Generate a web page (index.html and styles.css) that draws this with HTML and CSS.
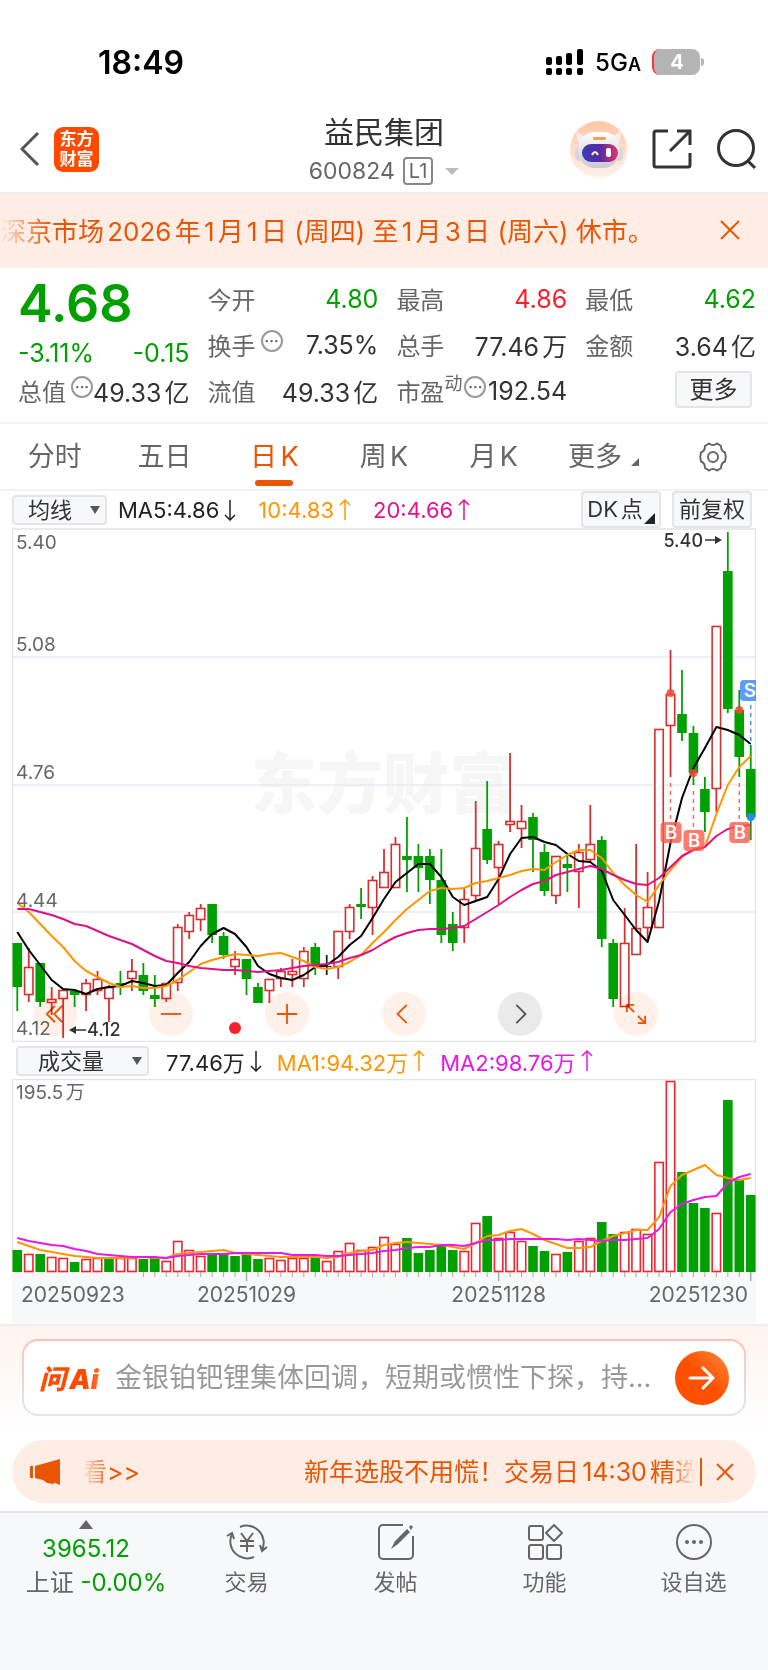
FILE: index.html
```
<!DOCTYPE html>
<html lang="zh-CN">
<head>
    <meta charset="UTF-8">
    <meta name="viewport" content="width=device-width, initial-scale=1.0">
    <title>益民集团 600824</title>
    <link rel="stylesheet" href="styles.css">
</head>
<body>
    <div class="status-bar">
        <span class="clock">18:49</span>
        <div class="status-right">
            <svg class="signal" viewBox="0 0 38 26">
                <g fill="#000">
                    <rect x="0" y="8" width="6" height="8" rx="2"/><rect x="10" y="7" width="6" height="9" rx="2"/>
                    <rect x="20" y="4" width="6" height="12" rx="2"/><rect x="31" y="0" width="6" height="16" rx="2"/>
                    <rect x="0" y="19" width="6" height="7" rx="2"/><rect x="10" y="19" width="6" height="7" rx="2"/>
                    <rect x="20" y="19" width="6" height="7" rx="2"/><rect x="31" y="19" width="6" height="7" rx="2"/>
                </g>
            </svg>
            <span class="network">5G<small>A</small></span>
            <span class="battery">4</span>
        </div>
    </div>

    <header class="header">
        <div class="header-left">
            <button class="icon-btn" aria-label="返回">
                <svg width="20" height="34" viewBox="0 0 20 34"><path d="M18 1 2 17l16 16" fill="none" stroke="#555" stroke-width="3"/></svg>
            </button>
            <a class="logo" href="#">东方<br>财富</a>
        </div>
        <div class="stock">
            <h1>益民集团</h1>
            <div class="stock-code"><span>600824</span><span class="level">L1</span><i class="caret"></i></div>
        </div>
        <div class="header-right">
            <button class="icon-btn" aria-label="智能助手">
                <svg width="57" height="57" viewBox="0 0 57 57">
                    <defs>
                        <linearGradient id="halo" x1="0" y1="0" x2="0" y2="1"><stop offset="0" stop-color="#ffc6a6"/><stop offset="1" stop-color="#fff3ec"/></linearGradient>
                        <linearGradient id="visor" x1="0" y1="0" x2="1" y2="0"><stop offset="0" stop-color="#3a3cb8"/><stop offset=".5" stop-color="#5a2aa0"/><stop offset="1" stop-color="#e0356a"/></linearGradient>
                        <linearGradient id="helmet" x1="0" y1="0" x2="0" y2="1"><stop offset="0" stop-color="#fff"/><stop offset="1" stop-color="#c9c9d2"/></linearGradient>
                    </defs>
                    <circle cx="28.500" cy="28.500" r="28.500" fill="url(#halo)"/>
                    <path d="M7 10q4 5 9 5l-6 8q-5-5-3-13zM50 10q-4 5-9 5l6 8q5-5 3-13z" fill="#f1eef2"/>
                    <ellipse cx="9" cy="33" rx="4" ry="7" fill="#d5d3dc"/><ellipse cx="49" cy="33" rx="4" ry="7" fill="#d5d3dc"/>
                    <rect x="8" y="11" width="42" height="36" rx="17" fill="url(#helmet)"/>
                    <rect x="23" y="16" width="13" height="3" rx="1" fill="#f0a060"/>
                    <rect x="12" y="23" width="36" height="18" rx="9" fill="url(#visor)"/>
                    <path d="M22 34q3-6 6 0" fill="none" stroke="#fff" stroke-width="2"/>
                    <rect x="36" y="27" width="5" height="9" rx="2" fill="#fff"/>
                </svg>
            </button>
            <button class="icon-btn" aria-label="分享">
                <svg width="40" height="40" viewBox="0 0 40 40" fill="none" stroke="#333" stroke-width="3"><path d="M16 2H4a2 2 0 0 0-2 2v32a2 2 0 0 0 2 2h32a2 2 0 0 0 2-2V24M25 2h13v14M38 2 18 22"/></svg>
            </button>
            <button class="icon-btn" aria-label="搜索">
                <svg width="40" height="42" viewBox="0 0 40 42" fill="none" stroke="#333" stroke-width="3"><circle cx="19" cy="20" r="17.500"/><path d="m30 32 8 8"/></svg>
            </button>
        </div>
    </header>

    <div class="banner">
        <p>深京市场2026年1月1日 (周四) 至1月3日 (周六) 休市。</p>
        <button class="icon-btn" aria-label="关闭公告">
            <svg width="20" height="20" viewBox="0 0 20 20"><path d="m1 1 18 18M19 1 1 19" stroke="#ea5504" stroke-width="2"/></svg>
        </button>
    </div>

    <section class="quote">
        <div class="last">
            <div class="last-price">4.68</div>
            <div class="cell green"><span>-3.11%</span><span>-0.15</span></div>
        </div>
        <div class="cell"><label>今开</label><span class="green">4.80</span></div>
        <div class="cell"><label>最高</label><span class="red">4.86</span></div>
        <div class="cell"><label>最低</label><span class="green">4.62</span></div>
        <div class="cell"><label>换手<i class="dots">···</i></label><span>7.35%</span></div>
        <div class="cell"><label>总手</label><span>77.46万</span></div>
        <div class="cell"><label>金额</label><span>3.64亿</span></div>
        <div class="cell"><label>总值<i class="dots">···</i></label><span>49.33亿</span></div>
        <div class="cell"><label>流值</label><span>49.33亿</span></div>
        <div class="cell"><label>市盈<sup>动</sup><i class="dots">···</i></label><span>192.54</span></div>
        <div class="cell cell-end"><button class="more-btn">更多</button></div>
    </section>

    <nav class="tabs">
        <a href="#">分时</a>
        <a href="#">五日</a>
        <a href="#" class="active">日K</a>
        <a href="#">周K</a>
        <a href="#">月K</a>
        <a href="#">更多<i class="corner"></i></a>
        <button class="icon-btn" aria-label="设置">
            <svg width="32" height="32" viewBox="0 0 32 32" fill="none" stroke="#666" stroke-width="2"><path d="M12 2.500q4 3 8 0l4 2.500q0 5 4 6.500 1.500 4.500 0 9-4 1.500-4 6.500l-4 2.500q-4-3-8 0L8 27q0-5-4-6.500-1.500-4.500 0-9Q8 10 8 5z"/><circle cx="16" cy="16" r="5"/></svg>
        </button>
    </nav>

    <div class="indicator">
        <span class="picker">
            <select aria-label="主图指标"><option>均线</option></select>
        </span>
        <div class="legend">
            <span>MA5:4.86<svg class="arrow" viewBox="0 0 12 22"><path d="M6 1v20M1 16l5 5 5-5"/></svg></span>
            <span class="orange">10:4.83<svg class="arrow" viewBox="0 0 12 22"><path d="M6 21V1M1 6l5-5 5 5"/></svg></span>
            <span class="pink">20:4.66<svg class="arrow" viewBox="0 0 12 22"><path d="M6 21V1M1 6l5-5 5 5"/></svg></span>
        </div>
        <button class="tool-btn">DK点<i class="corner"></i></button>
        <button class="tool-btn">前复权</button>
    </div>

    <div class="chart">
        <svg id="priceChart" viewBox="12 528 744 514"></svg>
        <div class="chart-controls">
            <button aria-label="最早"><svg viewBox="0 0 24 24"><path d="M12 3 3 12l9 9M20 3l-9 9 9 9"/></svg></button>
            <button aria-label="缩小"><svg viewBox="0 0 24 24"><path d="M1 12h22"/></svg></button>
            <button aria-label="放大"><svg viewBox="0 0 24 24"><path d="M1 12h22M12 1v22"/></svg></button>
            <button aria-label="左移"><svg viewBox="0 0 24 24"><path d="m15 2-10 10 10 10"/></svg></button>
            <button class="disabled" aria-label="右移"><svg viewBox="0 0 24 24"><path d="m8 2 10 10L8 22"/></svg></button>
            <button aria-label="全屏"><svg viewBox="0 0 24 24"><path d="m10 10-8-8M2 10V2h8M14 14l8 8M22 14v8h-8"/></svg></button>
        </div>
    </div>

    <div class="indicator indicator-vol">
        <span class="picker picker-wide">
            <select aria-label="副图指标"><option>成交量</option></select>
        </span>
        <div class="legend">
            <span>77.46万<svg class="arrow" viewBox="0 0 12 22"><path d="M6 1v20M1 16l5 5 5-5"/></svg></span>
            <span class="orange">MA1:94.32万<svg class="arrow" viewBox="0 0 12 22"><path d="M6 21V1M1 6l5-5 5 5"/></svg></span>
            <span class="purple">MA2:98.76万<svg class="arrow" viewBox="0 0 12 22"><path d="M6 21V1M1 6l5-5 5 5"/></svg></span>
        </div>
    </div>

    <div class="chart">
        <svg id="volumeChart" viewBox="12 1079 744 245"></svg>
    </div>

    <section class="ask">
        <form class="ask-box">
            <span class="ask-logo">问Ai</span>
            <input type="text" aria-label="问Ai" placeholder="金银铂钯锂集体回调，短期或惯性下探，持续关注">
            <button type="button" aria-label="提问">
                <svg width="28" height="28" viewBox="0 0 28 28"><path d="M2 14h23M15 4l10 10-10 10" fill="none" stroke="#fff" stroke-width="3" stroke-linecap="round" stroke-linejoin="round"/></svg>
            </button>
        </form>
    </section>

    <div class="notice">
        <svg width="30" height="26" viewBox="0 0 30 26" fill="#ea5504"><path d="M0 7h3v12H0zM5 7 30 0v26l-5-2-1-1v2l-7-1-4-3-8-2z"/></svg>
        <div class="notice-text"><span>看&gt;&gt;</span><span>新年选股不用慌！交易日14:30精选</span></div>
        <button class="icon-btn" aria-label="关闭通知">
            <svg width="18" height="18" viewBox="0 0 18 18"><path d="m1 1 16 16M17 1 1 17" stroke="#ea5504" stroke-width="2"/></svg>
        </button>
    </div>

    <nav class="bottom-nav">
        <a href="#" class="index">
            <i class="up"></i>
            <span class="green">3965.12</span>
            <span class="index-name">上证 <b class="green">-0.00%</b></span>
        </a>
        <a href="#">
            <svg width="42" height="38" viewBox="0 0 42 38"><path d="M14 4A17 17 0 0 1 36 27M28 34A17 17 0 0 1 6 11M1 13l5-3 2 6M41 24l-5 4-2-6M15 10l6 8 6-8M21 18v11M14 18h14M14 23h14"/></svg>
            交易
        </a>
        <a href="#">
            <svg width="38" height="38" viewBox="0 0 38 38"><path d="M26 2H6a4 4 0 0 0-4 4v26a4 4 0 0 0 4 4h26a4 4 0 0 0 4-4V13"/><path d="m14 26 4-8L30 6l3 3-12 12zM32 4l2-2 2 2-2 3z" fill="#666" stroke="none"/></svg>
            发帖
        </a>
        <a href="#">
            <svg width="36" height="38" viewBox="0 0 36 38"><rect x="2" y="3" width="14" height="14" rx="2"/><rect x="2" y="22" width="14" height="14" rx="2"/><rect x="20" y="22" width="14" height="14" rx="2"/><path d="m27 2 8 8-8 8-8-8z" stroke-linejoin="round"/></svg>
            功能
        </a>
        <a href="#">
            <svg width="38" height="38" viewBox="0 0 38 38"><circle cx="19" cy="19" r="17"/><g fill="#666" stroke="none"><circle cx="12" cy="19" r="2"/><circle cx="19" cy="19" r="2"/><circle cx="26" cy="19" r="2"/></g></svg>
            设自选
        </a>
    </nav>

    <script src="chart.js"></script>
</body>
</html>
```
FILE: styles.css
```
* { box-sizing: border-box; }
body { margin: 0; background: #fff; color: #333; font-family: Inter, "Noto Sans CJK SC", sans-serif; font-size: 24px; text-autospace: normal; }
h1, p { margin: 0; font-weight: 400; }
a { color: inherit; text-decoration: none; }
i { font-style: normal; }
svg { display: block; flex: none; }
button, select, input { font: inherit; color: inherit; }
.icon-btn { padding: 0; border: none; background: none; cursor: pointer; }
.green { color: #00a000; }
.red { color: #f5222d; }
.orange { color: #ff9500; }
.pink { color: #e6148c; }
.purple { color: #e619e6; }

/* status bar */
.status-bar { display: flex; justify-content: space-between; align-items: center; height: 96px; padding: 28px 68px 0 98px; color: #000; }
.clock { font-size: 32px; font-weight: 600; }
.status-right { display: flex; align-items: center; gap: 11px; }
.signal { width: 38px; height: 26px; }
.network { font-weight: 500; }
.network small { font-size: 18px; font-weight: 600; }
.battery { position: relative; width: 48px; height: 26px; border-radius: 8px; border-left: 2px solid #f33; background: #b4b4b4; color: #fff; font-size: 20px; font-weight: 700; line-height: 26px; text-align: center; }
.battery::after { content: ""; position: absolute; right: -4px; top: 9px; width: 3px; height: 8px; border-radius: 0 3px 3px 0; background: #b4b4b4; }

/* header */
.header { display: grid; grid-template-columns: 1fr auto 1fr; align-items: center; height: 98px; padding: 10px 11px 0; border-bottom: 2px solid #eee; }
.header-left { display: flex; align-items: center; gap: 14px; padding-left: 9px; }
.logo { width: 45px; height: 45px; padding-top: 2px; border-radius: 9px; background: #ff4a00; color: #fff; font-size: 17px; font-weight: 700; line-height: 20px; text-align: center; }
.stock { padding-top: 2px; text-align: center; }
.stock h1 { font-size: 30px; line-height: 42px; }
.stock-code { display: flex; align-items: center; gap: 8px; height: 36px; color: #666; font-size: 23px; }
.level { padding: 0 4px; border: 2px solid #888; border-radius: 4px; font-size: 20px; line-height: 24px; }
.caret { margin-left: 4px; border: 7px solid transparent; border-top-color: #bbb; border-bottom: none; }
.header-right { display: flex; align-items: center; justify-content: flex-end; gap: 25px; }

/* holiday banner */
.banner { display: flex; align-items: center; justify-content: space-between; height: 74px; padding: 0 28px 3px 0; background: #feede5; color: #ea5504; font-size: 26px; }
.banner p { white-space: nowrap; -webkit-mask-image: linear-gradient(90deg, transparent, #000 50px); mask-image: linear-gradient(90deg, transparent, #000 50px); }

/* quote */
.quote { display: grid; grid-template-columns: repeat(4, 1fr); grid-auto-rows: 46px; column-gap: 18px; height: 156px; padding: 9px 12px 0 18px; border-bottom: 2px solid #f2f2f2; }
.cell { display: flex; justify-content: space-between; align-items: center; padding-bottom: 2px; white-space: nowrap; font-size: 25px; }
.cell label { position: relative; display: flex; align-items: center; padding-bottom: 1px; color: #666; font-size: 24px; }
.cell-end { justify-content: flex-end; padding-bottom: 5px; }
.last { grid-row: span 2; }
.last-price { color: #00a000; font-size: 52px; font-weight: 600; line-height: 54px; }
.last .cell { height: 44px; padding: 0; }
.dots { width: 22px; height: 22px; margin: -8px 0 0 5px; border: 2px solid #999; border-radius: 50%; font-size: 14px; font-weight: 700; line-height: 18px; text-align: center; }
sup { font-size: 18px; line-height: 18px; margin-top: -14px; }
sup + .dots { margin-left: 2px; }
.more-btn { width: 77px; height: 37px; margin-right: 4px; padding: 0; border: 2px solid #e2e4e8; border-radius: 4px; background: #f7f8fa; font-size: 24px; line-height: 32px; }

/* period tabs */
.tabs { display: grid; grid-template-columns: repeat(7, 1fr); height: 67px; border-bottom: 2px solid #f2f2f2; color: #666; font-size: 27px; }
.tabs a { position: relative; line-height: 66px; text-align: center; }
.tabs .icon-btn { display: flex; align-items: center; justify-content: center; }
.tabs .active { color: #ea5504; }
.tabs .active::after { content: ""; position: absolute; left: 50%; bottom: 4px; width: 38px; height: 6px; margin-left: -19px; border-radius: 3px; background: #ea5504; }
.corner { display: inline-block; border-left: 8px solid transparent; border-bottom: 8px solid #666; margin-left: 9px; }

/* indicator rows */
.indicator { display: flex; align-items: center; gap: 11px; height: 37px; padding: 0 16px 0 12px; font-size: 22px; }
.indicator-vol { padding-left: 16px; gap: 17px; }
.picker { position: relative; width: 95px; }
.picker-wide { width: 133px; }
.picker::after { content: ""; position: absolute; right: 7px; top: 11px; border: 5px solid transparent; border-top: 8px solid #555; border-bottom: none; pointer-events: none; }
.picker select { display: block; width: 100%; height: 30px; padding: 0 0 0 14px; border: 2px solid #e2e4e8; border-radius: 4px; background: #f7f8fa; appearance: none; }
.picker-wide select { padding-left: 20px; }
.legend { display: flex; flex: 1; gap: 22px; white-space: nowrap; text-autospace: no-autospace; color: #222; }
.legend span { display: flex; align-items: center; gap: 5px; }
.indicator-vol .legend { gap: 15px; }
.legend .orange { color: #ff9500; }
.legend .pink { color: #e6148c; }
.legend .purple { color: #e619e6; }
.arrow { width: 12px; height: 22px; fill: none; stroke: currentColor; stroke-width: 1.5; }
.tool-btn { position: relative; width: 80px; height: 37px; padding: 0; border: 2px solid #e2e4e8; border-radius: 4px; background: #f7f8fa; white-space: nowrap; line-height: 33px; }
.tool-btn:first-of-type { padding-right: 12px; }
.tool-btn .corner { position: absolute; right: 4px; bottom: 2px; border-left-width: 11px; border-bottom: 11px solid #222; }

/* charts */
.chart { position: relative; margin: 0 12px; }
.chart > svg { width: 100%; height: auto; }
.chart-controls { position: absolute; left: 0; right: 0; bottom: 6px; display: flex; justify-content: space-between; padding: 0 98px 0 21px; mix-blend-mode: multiply; }
.chart-controls button { display: flex; align-items: center; justify-content: center; width: 44px; height: 44px; padding: 0; border: none; border-radius: 50%; background: #fff1ea; }
.chart-controls svg { width: 22px; height: 22px; fill: none; stroke: #ea5504; stroke-width: 2; }
.chart-controls .disabled { background: #eaeaea; }
.chart-controls .disabled svg { stroke: #555; }
.axis-label { fill: #666; font-size: 19px; }
.date-label { fill: #666; font-size: 21px; }
.mark-label { fill: #333; font-size: 18px; font-weight: 500; }
.watermark { fill: #f6f6f6; font-size: 66px; font-weight: 900; }
.tag { fill: #fff; font-size: 19px; font-weight: 600; text-anchor: middle; }

/* ask box */
.ask { height: 116px; padding: 13px 22px 0; border-top: 2px solid #eee; background: linear-gradient(#fff3ee, #fff 105px); }
.ask-box { display: flex; align-items: center; height: 77px; padding: 0 15px; border: 2px solid transparent; border-radius: 16px; background: linear-gradient(#fff, #fff) padding-box, linear-gradient(#ffc0b4, #dfe6f8) border-box; }
.ask-logo { width: 76px; font-size: 27px; font-weight: 900; font-style: italic; background: linear-gradient(90deg, #ff4a00 60%, #ff9060); -webkit-background-clip: text; background-clip: text; color: transparent; }
.ask-box input { flex: 1; min-width: 0; margin-right: 12px; padding: 0; border: none; outline: none; background: none; font-size: 27px; text-overflow: ellipsis; }
.ask-box input::placeholder { color: #999; }
.ask-box button { display: flex; align-items: center; justify-content: center; width: 54px; height: 54px; padding: 0; border: none; border-radius: 50%; background: linear-gradient(45deg, #ff4f00 50%, #ff8a40); }

/* notice */
.notice { display: flex; align-items: center; height: 63px; margin: 0 12px 8px; padding: 0 22px 0 18px; border-radius: 32px; background: #feede5; color: #ea5504; font-size: 25px; }
.notice-text { display: flex; flex: 1; justify-content: space-between; margin: 0 14px 0 22px; border-right: 2px solid #ea5504; line-height: 28px; white-space: nowrap; }
.notice-text span:first-child { -webkit-mask-image: linear-gradient(90deg, transparent, #000 30px); mask-image: linear-gradient(90deg, transparent, #000 30px); }
.notice-text span:last-child { -webkit-mask-image: linear-gradient(270deg, transparent 5px, #000 30px); mask-image: linear-gradient(270deg, transparent 5px, #000 30px); }

/* bottom nav */
.bottom-nav { display: grid; grid-template-columns: 172px repeat(4, 1fr); height: 159px; border-top: 2px solid #e4e4e6; background: #f7f8fa; color: #666; font-size: 22px; }
.bottom-nav a { display: flex; flex-direction: column; align-items: center; gap: 4px; padding-top: 10px; line-height: 34px; }
.bottom-nav svg { height: 38px; fill: none; stroke: #666; stroke-width: 2; }
.bottom-nav .index { gap: 0; padding-top: 7px; font-size: 24px; white-space: nowrap; }
.index-name { padding-left: 20px; }
.index b { font-weight: 400; }
.up { margin-bottom: 3px; border: 7px solid transparent; border-bottom: 9px solid #666; border-top: none; }
```
FILE: chart.js
```
const STEP = 11.46, FIRST = 17.3, BAR = 9;
const RED = '#d62f2f', GREEN = '#00a000';
const x = i => FIRST + STEP * i;

// colour, high, body top, body bottom, low
const candles = [
    ['g',943,943,987,1011],['r',948,967,995,1002],['g',963,963,1002,1007],['r',987,999,1003,1015],['r',988,990,999,1038],
    ['g',990,991,995,1007],['r',979,983,995,1011],['r',971,979,991,995],['r',985,987,999,1022],['g',971,983,985,995],
    ['r',959,971,979,991],['g',963,975,991,995],['g',975,995,999,1007],['r',983,983,999,1002],['r',924,927,983,991],
    ['r',912,915,932,939],['r',904,908,920,931],['g',904,904,935,943],['g',932,936,955,959],['r',951,959,967,975],
    ['g',959,959,979,995],['g',983,987,1003,1003],['r',979,979,991,1003],['r',968,971,979,987],['r',959,971,975,987],
    ['r',947,951,979,987],['g',943,947,965,975],['k',955,966,967,975],['r',931,931,967,979],['r',904,907,932,939],
    ['g',888,904,907,919],['r',876,880,908,935],['r',849,872,888,888],['r',837,844,888,888],['g',817,856,860,892],
    ['g',844,856,868,892],['g',849,856,880,904],['g',849,880,935,943],['g',912,924,943,951],['r',888,899,928,943],
    ['r',801,848,896,900],['g',781,829,860,864],['r',841,844,868,904],['r',753,821,825,832],['r',805,821,829,848],
    ['g',813,817,840,872],['g',844,852,891,896],['r',856,856,896,904],['g',856,864,868,892],['r',844,852,872,908],
    ['r',805,844,860,863],['g',836,840,939,947],['g',939,943,999,1007],['r',908,943,1007,1007],['r',844,928,955,955],
    ['r',872,907,928,940],['r',729,729,928,928],['r',650,694,726,777],['g',670,714,733,741],['g',726,733,773,785],
    ['g',777,789,812,832],['r',626,626,789,812],['g',532,571,709,713],['g',690,710,757,777],['g',745,769,817,840]
];
const ma5 = [932,950,965,980,989,990,994,989,987,986,981,983,986,985,973,962,946,934,928,934,947,966,974,978,980,975,967,965,957,945,936,918,899,882,873,864,864,877,897,905,901,897,879,854,838,837,842,845,854,861,862,871,900,915,930,942,901,843,798,768,748,727,730,735,744];
const ma10 = [903,912,924,936,947,961,971,977,983,987,986,988,988,986,980,972,964,960,957,954,955,956,954,953,957,961,967,969,967,962,955,943,932,920,909,900,891,888,889,888,883,881,878,875,871,869,870,862,855,850,850,858,873,885,895,902,885,870,857,849,847,814,785,767,756];
const ma20 = [909,909,912,915,919,924,926,931,936,940,944,950,956,961,963,966,968,969,970,970,971,972,971,970,968,966,965,964,962,958,955,950,943,937,933,930,929,929,928,926,919,912,905,897,890,884,881,875,872,869,866,869,875,880,884,885,878,867,856,850,847,836,829,826,825];

const BASE = 1272;
const volumes = [22,18,18,15,14,10,13,14,14,14,14,13,14,11,31,22,16,18,19,16,18,13,14,12,14,14,14,11,21,29,22,25,35,28,34,19,22,28,22,21,49,56,34,40,31,26,21,18,20,31,34,50,38,40,43,38,110,191,100,69,64,59,172,93,77];
const volumeColors = 'grgrrgrrgrrggrrrrggggg' + 'rrrrgrrrrrrrgggggrrgrrrggrgrrggrrrrrgggrggg';
const volMa1 = [30,26,22,20,18,16,15,14,14,14,14,15,14,14,18,19,20,21,22,19,18,17,16,15,15,15,15,14,15,19,21,22,27,29,30,29,28,27,25,23,29,36,37,41,43,38,32,28,24,24,25,31,36,39,42,42,55,86,97,102,107,97,94,92,94];
const volMa2 = [34,31,29,27,26,23,21,18,17,16,15,15,15,14,16,17,18,18,18,19,19,19,19,19,17,17,17,16,16,17,18,19,21,22,24,25,25,27,27,26,29,32,32,33,33,33,33,33,32,33,32,31,32,32,33,34,43,60,68,72,75,76,89,95,98];

function polyline(values, color) {
    const points = values.map((v, i) => `${x(i).toFixed(1)},${v}`).join(' ');
    return `<polyline points="${points}" fill="none" stroke="${color}" stroke-width="2" stroke-linejoin="round"/>`;
}

function text(cls, tx, ty, value, anchor = 'start') {
    return `<text class="${cls}" x="${tx}" y="${ty}" text-anchor="${anchor}">${value}</text>`;
}

function bar(i, top, bottom, color, hollow) {
    if (hollow) {
        return `<rect x="${x(i) - BAR / 2 + 0.3}" y="${top + 0.5}" width="${BAR - 0.6}" height="${Math.max(bottom - top - 1, 1)}" fill="#fff" stroke="${color}" stroke-width="1.6"/>`;
    }
    return `<rect x="${x(i) - BAR / 2 - 0.3}" y="${top}" width="${BAR + 0.6}" height="${bottom - top}" fill="${color}"/>`;
}

function drawPrice() {
    let svg = text('watermark', 251, 808, '东方财富');
    [657, 785, 912].forEach(y => {
        svg += `<path d="M12 ${y}H756" stroke="#e8eaf0" stroke-width="1.500"/>`;
    });
    svg += '<rect x="12.500" y="529" width="743" height="512.500" fill="none" stroke="#e2e3e6" stroke-width="1.500"/>';

    candles.forEach(([type, high, top, bottom, low], i) => {
        const color = type === 'r' ? RED : type === 'g' ? GREEN : '#222';
        svg += `<path d="M${x(i)} ${high}V${low}" stroke="${color}" stroke-width="1.8"/>`;
        svg += bar(i, top, bottom, color, type === 'r');
    });
    svg += polyline(ma5, '#000') + polyline(ma10, '#ff9500') + polyline(ma20, '#dd1288');

    // buy / sell points: index, dot y, dash start, tag y
    [[57, 693, 783, 832], [59, 773, 791, 840], [63, 710, 783, 832]].forEach(([i, dot, from, tag]) => {
        svg += `<circle cx="${x(i)}" cy="${dot}" r="4" fill="#ee4a2e" opacity=".85"/>`;
        svg += `<path d="M${x(i)} ${from}V${tag - 12}" stroke="#ff6a5a" stroke-width="1.500" stroke-dasharray="4 4"/>`;
        svg += `<rect x="${x(i) - 10}" y="${tag - 10}" width="21" height="21" rx="4" fill="#ff5a46" opacity=".8"/>`;
        svg += `<text class="tag" x="${x(i) + 0.5}" y="${tag + 7}">B</text>`;
    });
    svg += `<circle cx="${x(64)}" cy="817" r="4" fill="#2f86e8"/>`;
    svg += `<path d="M${x(64)} 705V742" stroke="#4c95f5" stroke-width="1.500" stroke-dasharray="4 4"/>`;
    svg += '<rect x="740" y="680" width="22" height="21" rx="4" fill="#5a9dfb"/><text class="tag" x="750" y="697">S</text>';

    [['5.40', 549], ['5.08', 651], ['4.76', 779], ['4.44', 907], ['4.12', 1035]].forEach(([v, y]) => {
        svg += text('axis-label', 16, y, v);
    });
    svg += text('mark-label', 703, 547, '5.40', 'end');
    svg += '<path d="M705 540h14" stroke="#333" stroke-width="1.500"/><path d="m715 536 7 4-7 4z" fill="#333"/>';
    svg += text('mark-label', 87, 1036, '4.12');
    svg += '<path d="M72 1030h14" stroke="#333" stroke-width="1.500"/><path d="m76 1026-7 4 7 4z" fill="#333"/>';
    svg += '<circle cx="235" cy="1028" r="6" fill="#f5222d"/>';
    document.getElementById('priceChart').innerHTML = svg;
}

function drawVolume() {
    let svg = '<rect x="12" y="1272" width="744" height="52" fill="#f7f8fa"/>';
    svg += '<path d="M12.500 1272V1079.500H755.500V1272" fill="none" stroke="#e2e3e6" stroke-width="1.500"/>';
    volumes.forEach((v, i) => {
        svg += bar(i, BASE - v, BASE, volumeColors[i] === 'r' ? '#f5222d' : GREEN, volumeColors[i] === 'r');
        if (i > 10) {
            const major = i === 20 || i === 42 || i === 64;
            svg += `<path d="M${x(i)} ${BASE}v${major ? 9 : 5}" stroke="#aaa" stroke-width="${major ? 1.5 : 1}"/>`;
        }
    });
    svg += polyline(volMa1.map(v => BASE - v), '#ff9500') + polyline(volMa2.map(v => BASE - v), '#e619e6');
    svg += text('axis-label', 16, 1099, '195.5万');
    svg += text('date-label', 21, 1302, '20250923');
    svg += text('date-label', x(20), 1302, '20251029', 'middle');
    svg += text('date-label', x(42), 1302, '20251128', 'middle');
    svg += text('date-label', 748, 1302, '20251230', 'end');
    document.getElementById('volumeChart').innerHTML = svg;
}

drawPrice();
drawVolume();
```
